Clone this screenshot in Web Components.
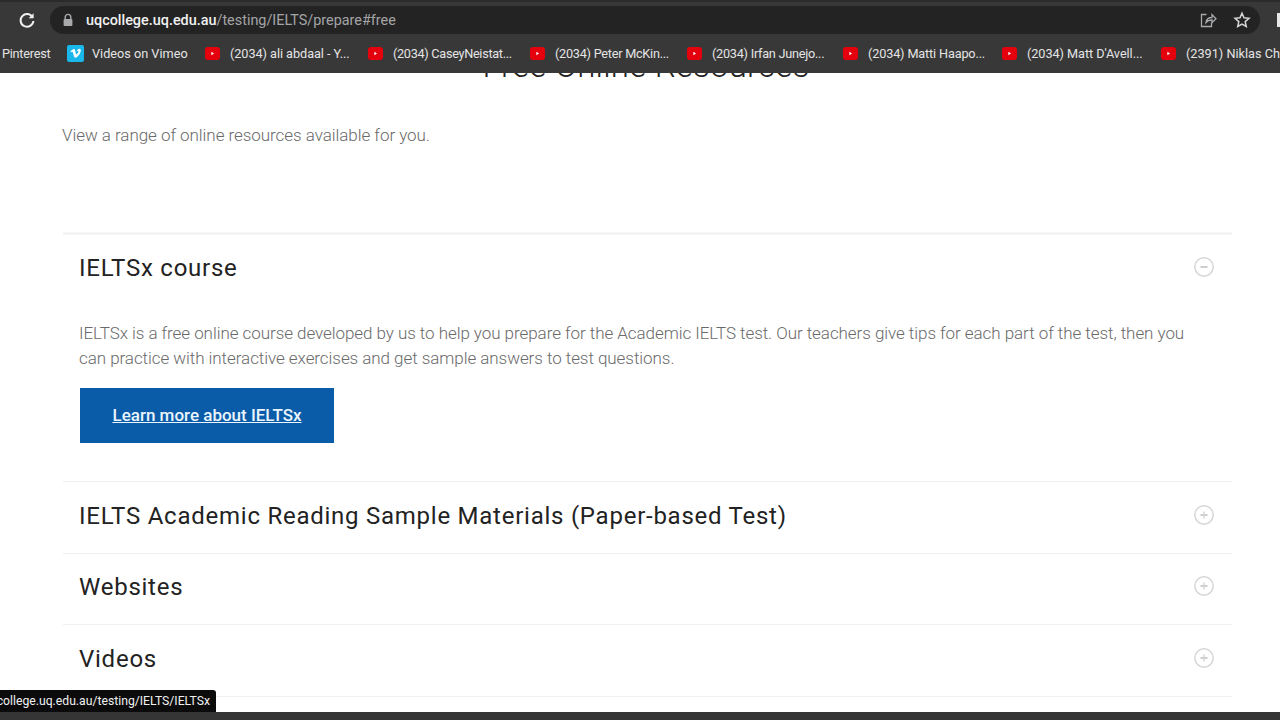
<!DOCTYPE html>
<html lang="en">
<head>
<meta charset="utf-8">
<title>Free Online Resources</title>
<style>
	html, body {
		margin: 0;
		height: 100%;
		overflow: hidden;
		background: #fff;
		font-family: Roboto, "Liberation Sans", sans-serif;
	}
	body {
		display: flex;
		flex-direction: column;
		height: 720px;
		position: relative;
	}
</style>
</head>
<body>
<browser-toolbar></browser-toolbar>
<bookmark-bar>
	<bookmark-item kind="none" style="width:50px;letter-spacing:-.25px">Pinterest</bookmark-item>
	<bookmark-item kind="vimeo" style="width:121px;margin-left:15px">Videos on Vimeo</bookmark-item>
	<bookmark-item style="width:146px;margin-left:17px;letter-spacing:-.05px">(2034) ali abdaal - Y...</bookmark-item>
	<bookmark-item style="width:144px;margin-left:17px;letter-spacing:-.3px">(2034) CaseyNeistat...</bookmark-item>
	<bookmark-item style="width:139px;margin-left:18px;letter-spacing:-.25px">(2034) Peter McKin...</bookmark-item>
	<bookmark-item style="width:138px;margin-left:18px;letter-spacing:-.25px">(2034) Irfan Junejo...</bookmark-item>
	<bookmark-item style="width:141px;margin-left:18px;letter-spacing:-.15px">(2034) Matti Haapo...</bookmark-item>
	<bookmark-item style="width:141px;margin-left:18px;letter-spacing:-.05px">(2034) Matt D'Avell...</bookmark-item>
	<bookmark-item style="width:141px;margin-left:18px">(2391) Niklas Christl...</bookmark-item>
</bookmark-bar>
<resource-page>
	<span slot="heading">Free Online Resources</span>
	<span slot="intro">View a range of online resources available for you.</span>
	<accordion-item open title-text="IELTSx course">
		<p>IELTSx is a free online course developed by us to help you prepare for the Academic IELTS test. Our teachers give tips for each part of the test, then you can practice with interactive exercises and get sample answers to test questions.</p>
		<cta-button>Learn more about IELTSx</cta-button>
	</accordion-item>
	<accordion-item title-text="IELTS Academic Reading Sample Materials (Paper-based Test)"></accordion-item>
	<accordion-item title-text="Websites"></accordion-item>
	<accordion-item title-text="Videos"></accordion-item>
</resource-page>
<status-tip>college.uq.edu.au/testing/IELTS/IELTSx</status-tip>
<page-foot></page-foot>
<script>
	/**
	 * Creates a component class from a block of shadow markup.
	 */
	function shadowElement (html) {
		const template = document.createElement("template");
		template.innerHTML = html;
		return class extends HTMLElement {
			constructor () {
				super();
				this.attachShadow({mode: "open"}).appendChild(template.content.cloneNode(true));
			}
		};
	}

	customElements.define("browser-toolbar", shadowElement(`
		<style>
			:host {
				display: flex;
				align-items: center;
				flex: none;
				height: 38px;
				box-sizing: border-box;
				padding: 0 0 0 18px;
				background: #383838;
				border-top: 2px solid #2b2b2b;
				overflow: hidden;
				font: 14.4px Roboto, "Liberation Sans", sans-serif;
			}
			.reload { flex: none; width: 18px; height: 18px; margin-right: 14px; }
			.omnibox {
				flex: none;
				display: flex;
				align-items: center;
				width: 1210px;
				height: 28px;
				box-sizing: border-box;
				padding: 0 9px 0 12px;
				border-radius: 14px;
				background: #232323;
			}
			.lock { flex: none; width: 12px; height: 14px; margin-right: 12px; }
			.url { flex: 1; color: #a4a5a7; white-space: nowrap; }
			.url b { font-weight: 500; color: #f1f1f1; }
			.action { flex: none; width: 18px; height: 18px; margin-left: 16px; }
			.tab { flex: none; width: 6px; height: 14px; margin-left: 17px; background: #e8e8e8; }
		</style>
		<svg class="reload" viewBox="0 0 18 18" fill="none" stroke="#f1f1f1" stroke-width="2">
			<path d="M14.6 6.2A6.4 6.4 0 1 0 15.4 10"/>
			<path d="M15.6 2.2v5h-5z" fill="#f1f1f1" stroke="none"/>
		</svg>
		<div class="omnibox">
			<svg class="lock" viewBox="0 0 12 14" fill="#a9aaac">
				<path d="M3.2 6V4.2a2.8 2.8 0 0 1 5.6 0V6" fill="none" stroke="#a9aaac" stroke-width="1.4"/>
				<rect x="1.6" y="6" width="8.8" height="7" rx="1"/>
			</svg>
			<span class="url"><b>uqcollege.uq.edu.au</b>/testing/IELTS/prepare#free</span>
			<svg class="action" viewBox="0 0 18 18" fill="none" stroke="#a9aaac" stroke-width="1.3">
				<path d="M7.5 3.5H2.5v12h10v-4"/>
				<path d="M7 11.5c.4-3.4 2.6-5 6-5V3.6l4 4.2-4 4V9c-2.6 0-4.6.6-6 2.5z"/>
			</svg>
			<svg class="action" viewBox="0 0 18 18" fill="none" stroke="#d6d6d6" stroke-width="1.5">
				<path d="M9 2.2l2 4.6 5 .5-3.8 3.3 1.1 4.9L9 13l-4.3 2.5 1.1-4.9L2 7.3l5-.5z"/>
			</svg>
		</div>
		<span class="tab"></span>
	`));

	customElements.define("bookmark-bar", shadowElement(`
		<style>
			:host {
				display: flex;
				align-items: center;
				flex: none;
				height: 35px;
				box-sizing: border-box;
				padding: 0 0 5px 2px;
				background: #383838;
				overflow: hidden;
				white-space: nowrap;
			}
		</style>
		<slot></slot>
	`));

	const vimeoIcon = `<svg width="17" height="17" viewBox="0 0 17 17"><rect width="17" height="17" rx="2" fill="#1ab7ea"/><path d="M3.5 6.4l.6.8c1-.7 1.500-.8 1.800.2.600 2 1 4.700 2.200 5.300 1.600.7 5.500-3.700 5.700-7.200.1-2.100-2.800-2.500-3.900.6 1.300-.6 1.800.2 1.200 1.400-.6 1.100-1.300 1.900-1.700 1.900-.6 0-1-3.600-1.500-4.700C7 3.200 5.400 4.500 3.500 6.400z" fill="#fff"/></svg>`;
	const youtubeIcon = `<svg width="15" height="15" viewBox="0 0 15 15"><rect y="1" width="15" height="13" rx="3" fill="#e4000c"/><path d="M6.400 5.700l2.600 1.800-2.600 1.800z" fill="#fff"/></svg>`;

	/**
	 * A bookmark with an optional favicon.
	 */
	class BookmarkItem extends HTMLElement {
		constructor () {
			super();
			const kind = this.getAttribute("kind");
			const icon = kind === "none" ? "" : (kind === "vimeo" ? vimeoIcon : youtubeIcon);
			this.attachShadow({mode: "open"}).innerHTML = `
				<style>
					:host {
						display: flex;
						align-items: center;
						flex: none;
						gap: 8px;
						color: #e4e4e5;
						font: 12.7px Roboto, "Liberation Sans", sans-serif;
					}
					:host(:not([kind])) { gap: 10px; }
					svg { flex: none; }
				</style>
				${icon}<slot></slot>
			`;
		}
	}
	customElements.define("bookmark-item", BookmarkItem);

	customElements.define("resource-page", shadowElement(`
		<style>
			:host {
				display: block;
				flex: 1;
				min-height: 0;
				overflow: hidden;
				box-sizing: border-box;
				padding: 0 48px 0 63px;
				background: #fff;
			}
			h2 {
				margin: -27px 0 0;
				height: 40px;
				line-height: 40px;
				text-align: center;
				font-size: 33px;
				font-weight: 300;
				letter-spacing: .2px;
				color: #222;
				padding-right: 3px;
			}
			.intro {
				margin: 37px 0 0 -1px;
				height: 24px;
				line-height: 24px;
				font-size: 17px;
				font-weight: 300;
				letter-spacing: -.05px;
				color: #6a6a6a;
			}
			.list { margin-top: 86px; border-bottom: 1px solid #efefef; }
		</style>
		<h2><slot name="heading"></slot></h2>
		<p class="intro"><slot name="intro"></slot></p>
		<div class="list"><slot></slot></div>
	`));

	/**
	 * An accordion row, with its title in an attribute and its body in the slot.
	 */
	class AccordionItem extends HTMLElement {
		constructor () {
			super();
			const mark = this.hasAttribute("open") ? "" : `<path d="M10 6.500v7"/>`;
			this.attachShadow({mode: "open"}).innerHTML = `
				<style>
					:host {
						display: block;
						border-top: 1px solid #efefef;
					}
					:host([open]) { box-shadow: 0 -1px 0 #f8f8f8, inset 0 1px 0 #f8f8f8; }
					.head {
						display: flex;
						align-items: center;
						justify-content: space-between;
						height: 67px;
						margin-bottom: 3.5px;
						padding: 0 18px 0 16px;
					}
					h3 {
						margin: 0;
						font-size: 24px;
						font-weight: 400;
						letter-spacing: .75px;
						color: #222;
					}
					svg { flex: none; width: 20px; height: 20px; margin-bottom: 2px; }
					.body { padding: 0 16px; }
					:host([open]) .body { height: 176.5px; }
					:host(:not([open])) .body { display: none; }
					::slotted(p) {
						margin: 0;
						padding: 16px 30px 0 0;
						height: 67.5px;
						font-size: 17px;
						font-weight: 300;
						letter-spacing: -.06px;
						line-height: 25px;
						color: #6a6a6a;
					}
				</style>
				<div class="head">
					<h3></h3>
					<svg viewBox="0 0 20 20" fill="none" stroke="#d6d6d6" stroke-width="1.500">
						<circle cx="10" cy="10" r="9.200"/>
						<path d="M6.500 10h7" stroke="#bdbdbd"/>
						${mark}
					</svg>
				</div>
				<div class="body"><slot></slot></div>
			`;
			this.shadowRoot.querySelector("h3").textContent = this.getAttribute("title-text");
		}
	}
	customElements.define("accordion-item", AccordionItem);

	customElements.define("cta-button", shadowElement(`
		<style>
			:host {
				display: flex;
				align-items: center;
				justify-content: center;
				width: 254px;
				height: 55px;
				box-sizing: border-box;
				padding-bottom: 2px;
				margin-left: 1px;
				background: #0a5ca8;
				color: #eaf5fd;
				font-size: 17px;
				font-weight: 500;
				text-decoration: underline;
			}
		</style>
		<slot></slot>
	`));

	customElements.define("status-tip", shadowElement(`
		<style>
			:host {
				position: absolute;
				left: 0;
				bottom: 8px;
				display: flex;
				align-items: center;
				justify-content: flex-end;
				width: 216px;
				height: 22px;
				box-sizing: border-box;
				padding-right: 6px;
				overflow: hidden;
				border-radius: 0 3px 0 0;
				background: #0b0b0c;
				color: #f0f0f0;
				font: 12.2px Roboto, "Liberation Sans", sans-serif;
				white-space: nowrap;
				z-index: 2;
			}
		</style>
		<slot></slot>
	`));

	customElements.define("page-foot", shadowElement(`
		<style>
			:host { display: block; flex: none; height: 8px; background: #353535; }
		</style>
	`));
</script>
</body>
</html>
